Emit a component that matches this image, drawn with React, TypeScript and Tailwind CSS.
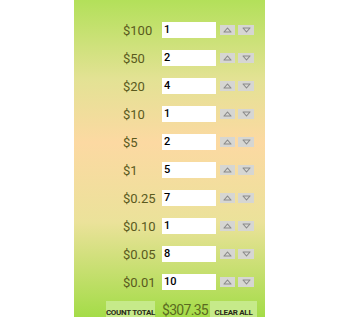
import React from "react";

const rows = [
  ["$100", "1"],
  ["$50", "2"],
  ["$20", "4"],
  ["$10", "1"],
  ["$5", "2"],
  ["$1", "5"],
  ["$0.25", "7"],
  ["$0.10", "1"],
  ["$0.05", "8"],
  ["$0.01", "10"],
];

function Tri({ up }: { up: boolean }) {
  return (
    <svg width="9" height="6" viewBox="0 0 9 6">
      {up ? (
        <path d="M1 5 L4.5 1 L8 5 Z" fill="none" stroke="#8a8a8a" strokeWidth="1.1" strokeLinejoin="round" />
      ) : (
        <path d="M1 1 L4.5 5 L8 1 Z" fill="none" stroke="#8a8a8a" strokeWidth="1.1" strokeLinejoin="round" />
      )}
    </svg>
  );
}

export default function App() {
  return (
    <div className="w-[340px] h-[317px] bg-white overflow-hidden" style={{ fontFamily: "Roboto, 'Liberation Sans', sans-serif" }}>
      <div className="ml-[74px] w-[191px] h-[317px] bg-[linear-gradient(to_bottom,#b3e05a_0%,#e3e294_25%,#fcd9a2_45%,#ebe29a_70%,#a4dc48_100%)] pt-[22px] flex flex-col">
        <div className="flex flex-col gap-[12px]">
          {rows.map(([label, val]) => (
            <div key={label} className="flex items-center h-[16px]">
              <div className="w-[88px] pl-[49px] text-[13px] text-[#5a5a1e] leading-none whitespace-nowrap">{label}</div>
              <div className="w-[54px] h-[16px] bg-white text-[11px] text-black leading-[16px] pl-[2px] font-medium">{val}</div>
              <div className="ml-[4px] w-[15px] h-[10px] bg-[#d6d6d2] flex items-center justify-center"><Tri up /></div>
              <div className="ml-[3px] w-[16px] h-[10px] bg-[#d6d6d2] flex items-center justify-center"><Tri up={false} /></div>
            </div>
          ))}
        </div>
        <div className="flex items-start mt-[11px]">
          <div className="ml-[32px] w-[49px] h-[20px] bg-[#c6ea8a] text-[8px] font-bold text-[#2a2a1a] flex items-end justify-center pb-[2px] whitespace-nowrap tracking-[-0.3px]">COUNT TOTAL</div>
          <div className="ml-[7px] w-[48px] text-[14px] tracking-[-0.7px] leading-none text-[#5a6a20] mt-[2px] whitespace-nowrap">$307.35</div>
          <div className="w-[47px] h-[20px] bg-[#c6ea8a] text-[8px] font-bold text-[#2a2a1a] flex items-end justify-center pb-[2px] whitespace-nowrap tracking-[-0.3px]">CLEAR ALL</div>
        </div>
      </div>
    </div>
  );
}
